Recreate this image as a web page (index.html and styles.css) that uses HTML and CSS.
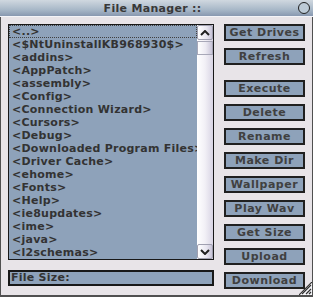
FILE: index.html
```html
<!DOCTYPE html>
<html lang="en">
<head>
    <meta charset="UTF-8">
    <title>File Manager</title>
    <link rel="stylesheet" href="styles.css">
</head>
<body>
    <div class="window">
        <div class="titlebar">
            <span class="title">File Manager ::</span>
            <span class="orb"></span>
        </div>
        <div class="content">
            <div class="leftCol">
                <div class="listbox">
                    <ul class="items">
                        <li class="selected">&lt;..&gt;</li>
                        <li>&lt;$NtUninstallKB968930$&gt;</li>
                        <li>&lt;addins&gt;</li>
                        <li>&lt;AppPatch&gt;</li>
                        <li>&lt;assembly&gt;</li>
                        <li>&lt;Config&gt;</li>
                        <li>&lt;Connection Wizard&gt;</li>
                        <li>&lt;Cursors&gt;</li>
                        <li>&lt;Debug&gt;</li>
                        <li>&lt;Downloaded Program Files&gt;</li>
                        <li>&lt;Driver Cache&gt;</li>
                        <li>&lt;ehome&gt;</li>
                        <li>&lt;Fonts&gt;</li>
                        <li>&lt;Help&gt;</li>
                        <li>&lt;ie8updates&gt;</li>
                        <li>&lt;ime&gt;</li>
                        <li>&lt;java&gt;</li>
                        <li>&lt;l2schemas&gt;</li>
                    </ul>
                    <div class="scrollbar">
                        <div class="arrow">
                            <svg width="10" height="6" viewBox="0 0 10 6"><path d="M1 5 L5 1 L9 5" fill="none" stroke="#202020" stroke-width="2"/></svg>
                        </div>
                        <div class="thumb"></div>
                        <div class="track"></div>
                        <div class="arrow">
                            <svg width="10" height="6" viewBox="0 0 10 6"><path d="M1 1 L5 5 L9 1" fill="none" stroke="#202020" stroke-width="2"/></svg>
                        </div>
                    </div>
                </div>
                <div class="fileSize">File Size:</div>
            </div>
            <div class="buttons">
                <button>Get Drives</button>
                <button>Refresh</button>
                <button class="spaced">Execute</button>
                <button>Delete</button>
                <button>Rename</button>
                <button>Make Dir</button>
                <button>Wallpaper</button>
                <button>Play Wav</button>
                <button>Get Size</button>
                <button>Upload</button>
                <button>Download</button>
            </div>
        </div>
        <div class="grip">
            <svg width="13" height="13" viewBox="0 0 13 13"><path d="M13 0 L13 13 L0 13 Z" fill="#f4f4f8"/><path d="M12 3 L3 12 M12 7 L7 12 M12 10 L10 12" stroke="#303030" stroke-width="1.2"/><path d="M13 0 L0 13" stroke="#303030" stroke-width="1.2"/></svg>
        </div>
    </div>
</body>
</html>
```

FILE: styles.css
```css
body {
    margin: 0;
    background-color: #e8e4e8;
}

.window {
    position: relative;
    width: 313px;
    height: 297px;
    box-sizing: border-box;
    border-left: 1px solid #505050;
    border-right: 1px solid #505050;
    border-bottom: 2px solid #505050;
    background-color: #e8e4e8;
    font: bold 10px "DejaVu Sans", Verdana, sans-serif;
    color: #333333;
}

.titlebar {
    height: 16px;
    margin: 0 -1px;
    border-bottom: 1px solid #f4f4f8;
    background: linear-gradient(#d0d8e0, #a8b8c8 60%, #8898b0);
    display: flex;
    align-items: center;
    justify-content: center;
    position: relative;
}

.title {
    font-size: 11px;
    color: #383838;
    letter-spacing: 0.3px;
    margin-right: 8px;
}

.orb {
    position: absolute;
    right: 3px;
    top: 2px;
    width: 10px;
    height: 10px;
    border: 1.5px solid #202020;
    border-radius: 50%;
    background-color: #bccad6;
}

.content {
    display: flex;
    padding: 7px 0 0 7px;
}

.leftCol {
    width: 206px;
}

.listbox {
    display: flex;
    height: 234px;
    border: 1px solid #181818;
    background-color: #8ea2ba;
}

.items {
    flex: 1;
    margin: 0;
    padding: 0;
    list-style: none;
    overflow: hidden;
}

.items li {
    height: 13px;
    line-height: 13px;
    padding-left: 3px;
    white-space: nowrap;
    font-size: 11px;
    letter-spacing: 0.25px;
    box-sizing: border-box;
}

.items li.selected {
    border: 1px dotted #404040;
    line-height: 11px;
    padding-left: 2px;
}

.scrollbar {
    width: 16px;
    display: flex;
    flex-direction: column;
    background: linear-gradient(90deg, #ffffff, #f2f0f6 50%, #d8d4e4);
}

.scrollbar .arrow {
    height: 15px;
    box-sizing: border-box;
    border: 1px solid #a0a0b0;
    border-radius: 2px;
    background: linear-gradient(90deg, #ffffff, #e8e6f0 60%, #c8c4d8);
    display: flex;
    align-items: center;
    justify-content: center;
}

.scrollbar .thumb {
    height: 14px;
    margin-top: 1px;
    box-sizing: border-box;
    border: 1px solid #a8a8b8;
    background: linear-gradient(90deg, #ffffff, #eceaf2 55%, #c8c4d8);
}

.scrollbar .track {
    flex: 1;
}

.fileSize {
    margin-top: 10px;
    height: 16px;
    box-sizing: border-box;
    border: 2px solid #181818;
    background-color: #8ea2ba;
    padding-left: 1px;
    line-height: 12px;
    font-size: 11px;
    letter-spacing: 0.25px;
}

.buttons {
    display: flex;
    flex-direction: column;
    gap: 7px;
    margin-left: 10px;
}

.buttons button {
    width: 81px;
    height: 17px;
    padding: 0;
    border: 2px solid #202020;
    border-radius: 0;
    background-color: #8ea2ba;
    font: bold 11px "DejaVu Sans", Verdana, sans-serif;
    color: #404040;
    letter-spacing: 0.5px;
}

.buttons button.spaced {
    margin-top: 8px;
}

.grip {
    position: absolute;
    right: 0;
    bottom: 0;
    width: 13px;
    height: 13px;
}
```
